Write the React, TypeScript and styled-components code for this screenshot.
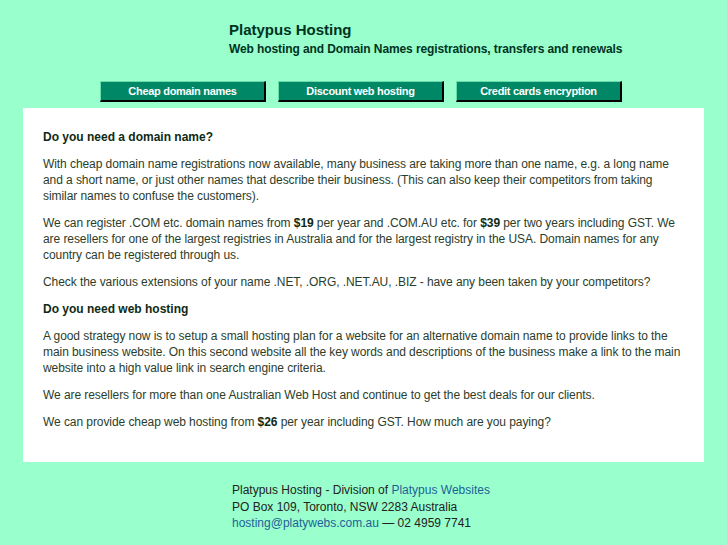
import { createGlobalStyle, styled } from "styled-components";

const GlobalStyle = createGlobalStyle`
  html, body {
    margin: 0;
    padding: 0;
    background: #99ffcc;
  }
  body {
    font-family: "Liberation Sans", Arial, Helvetica, sans-serif;
    font-size: 12px;
    color: #2b3d2b;
  }
`;

export default function App() {
  return (
    <>
      <GlobalStyle />
      <Page>
        <Header>
          <Title>Platypus Hosting</Title>
          <Tagline>
            Web hosting and Domain Names registrations, transfers and renewals
          </Tagline>
        </Header>

        <Nav>
          <NavButton href="#">Cheap domain names</NavButton>
          <NavButton href="#">Discount web hosting</NavButton>
          <NavButton href="#">Credit cards encryption</NavButton>
        </Nav>

        <Content>
          <Heading>Do you need a domain name?</Heading>
          <Text>
            With cheap domain name registrations now available, many business
            are taking more than one name, e.g. a long name and a short name, or
            just other names that describe their business. (This can also keep
            their competitors from taking similar names to confuse the
            customers).
          </Text>
          <Text>
            We can register .COM etc. domain names from <Price>$19</Price> per
            year and .COM.AU etc. for <Price>$39</Price> per two years including
            GST. We are resellers for one of the largest registries in Australia
            and for the largest registry in the USA. Domain names for any
            country can be registered through us.
          </Text>
          <Text>
            Check the various extensions of your name .NET, .ORG, .NET.AU, .BIZ
            - have any been taken by your competitors?
          </Text>
          <Heading>Do you need web hosting</Heading>
          <Text>
            A good strategy now is to setup a small hosting plan for a website
            for an alternative domain name to provide links to the main business
            website. On this second website all the key words and descriptions
            of the business make a link to the main website into a high value
            link in search engine criteria.
          </Text>
          <Text>
            We are resellers for more than one Australian Web Host and continue
            to get the best deals for our clients.
          </Text>
          <Text>
            We can provide cheap web hosting from <Price>$26</Price> per year
            including GST. How much are you paying?
          </Text>
        </Content>

        <Footer>
          <div>
            Platypus Hosting - Division of{" "}
            <FooterLink href="#">Platypus Websites</FooterLink>
          </div>
          <div>PO Box 109, Toronto, NSW 2283 Australia</div>
          <div>
            <FooterLink href="#">hosting@platywebs.com.au</FooterLink> — 02 4959
            7741
          </div>
        </Footer>
      </Page>
    </>
  );
}

const Page = styled.div`
  width: 727px;
  padding-top: 20px;
`;

const Header = styled.header`
  padding-left: 229px;
  color: #003322;
`;

const Title = styled.h1`
  margin: 0;
  font-size: 15px;
  font-weight: bold;
  line-height: 20px;
`;

const Tagline = styled.h2`
  margin: 0;
  font-size: 12px;
  font-weight: bold;
  line-height: 18px;
  letter-spacing: -0.1px;
`;

const Nav = styled.nav`
  display: flex;
  gap: 12px;
  padding-left: 100px;
  margin-top: 23px;
  margin-bottom: 6px;
`;

const NavButton = styled.a`
  display: block;
  box-sizing: border-box;
  width: 166px;
  height: 21px;
  line-height: 18px;
  background: #008866;
  border-top: 1px solid #66ddaa;
  border-left: 1px solid #66ddaa;
  border-right: 2px solid #000;
  border-bottom: 2px solid #000;
  color: #fff;
  font-size: 11px;
  font-weight: bold;
  letter-spacing: -0.3px;
  text-align: center;
  text-decoration: none;
`;

const Content = styled.main`
  margin: 0 23px;
  padding: 21px 20px;
  background: #fff;
`;

const Heading = styled.h3`
  margin: 0 0 11px;
  font-size: 12px;
  font-weight: bold;
  line-height: 16px;
  color: #0f2a14;
`;

const Text = styled.p`
  margin: 0 0 11px;
  line-height: 16px;
  letter-spacing: -0.07px;
`;

const Price = styled.b`
  color: #0f2a14;
`;

const Footer = styled.footer`
  padding: 20px 0 0 232px;
  line-height: 16.5px;
  color: #222;
`;

const FooterLink = styled.a`
  color: #225f99;
  text-decoration: none;
`;
